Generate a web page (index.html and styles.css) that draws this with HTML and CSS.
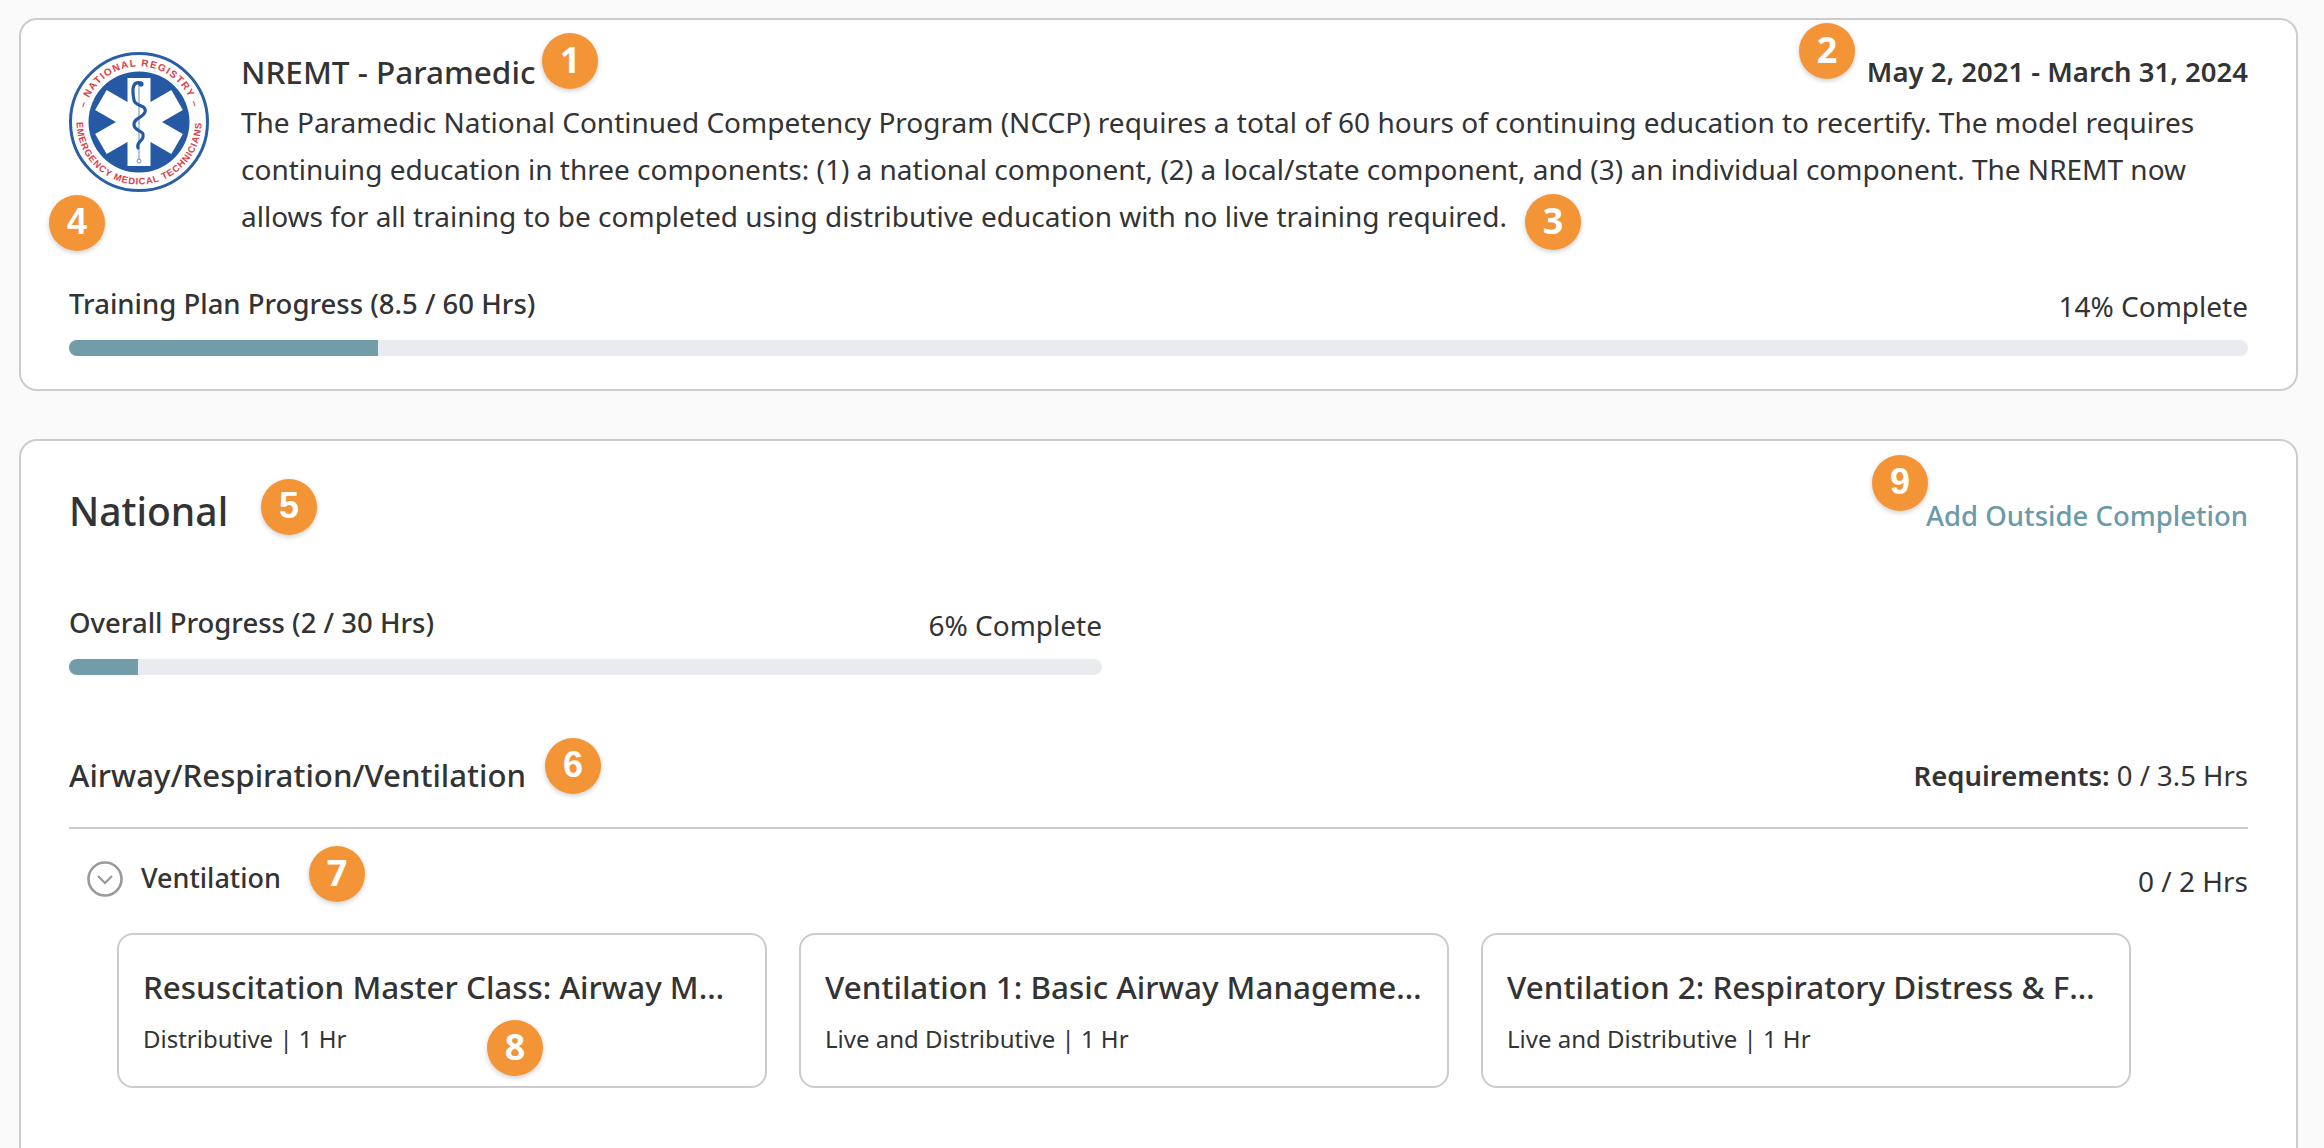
FILE: index.html
```html
<!DOCTYPE html>
<html lang="en">
<head>
  <meta charset="UTF-8">
  <title>NREMT - Paramedic Training Plan</title>
  <link rel="stylesheet" href="styles.css">
</head>
<body>
  <section class="card plan">
    <div class="plan-top">
      <svg class="logo" viewBox="0 0 140 140" role="img" aria-label="National Registry of Emergency Medical Technicians">
        <defs>
          <path id="arcTop" d="M 14.5 70 A 55.5 55.5 0 0 1 125.5 70"/>
          <path id="arcBottom" d="M 7.84 63.5 A 62.5 62.5 0 1 0 132.16 63.5"/>
        </defs>
        <circle cx="70" cy="70" r="68.5" fill="#fff" stroke="#2a5ea6" stroke-width="3"/>
        <circle cx="70" cy="70" r="50.5" fill="#2559a3"/>
        <g fill="#fff">
          <rect x="58.5" y="26" width="23" height="88"/>
          <rect x="58.5" y="26" width="23" height="88" transform="rotate(60 70 70)"/>
          <rect x="58.5" y="26" width="23" height="88" transform="rotate(120 70 70)"/>
        </g>
        <path d="M70 30V108" fill="none" stroke="#8fb0d6" stroke-width="1.4"/>
        <path d="M72 31C63 29 63 38 65 48C66 55 78 52 76 60C74 66 64 66 65 73C66 80 76 78 74 85C73 90 67 90 69 96" fill="none" stroke="#2559a3" stroke-width="3.2" stroke-linecap="round"/>
        <circle cx="72" cy="32" r="2.6" fill="#2559a3"/>
        <circle cx="70" cy="109" r="2" fill="none" stroke="#6d93c6" stroke-width="1"/>
        <text class="logo-text logo-top"><textPath href="#arcTop" startOffset="50%" text-anchor="middle">– NATIONAL REGISTRY –</textPath></text>
        <text class="logo-text"><textPath href="#arcBottom" startOffset="50%" text-anchor="middle">EMERGENCY MEDICAL TECHNICIANS</textPath></text>
      </svg>
      <div class="plan-info">
        <div class="plan-head">
          <h1 class="plan-title">NREMT - Paramedic</h1>
          <div class="plan-dates">May 2, 2021 - March 31, 2024</div>
        </div>
        <p class="plan-desc">The Paramedic National Continued Competency Program (NCCP) requires a total of 60 hours of continuing education to recertify. The model requires continuing education in three components: (1) a national component, (2) a local/state component, and (3) an individual component. The NREMT now allows for all training to be completed using distributive education with no live training required.</p>
      </div>
    </div>
    <div class="progress-row plan-progress">
      <span class="progress-label">Training Plan Progress (8.5 / 60 Hrs)</span>
      <span class="progress-pct">14% Complete</span>
    </div>
    <div class="bar"><div class="bar-fill" style="width: 14.17%"></div></div>
  </section>

  <section class="card national">
    <div class="national-head">
      <h2 class="national-title">National</h2>
      <a class="add-link" href="#">Add Outside Completion</a>
    </div>

    <div class="overall">
      <div class="progress-row">
        <span class="progress-label">Overall Progress (2 / 30 Hrs)</span>
        <span class="progress-pct">6% Complete</span>
      </div>
      <div class="bar"><div class="bar-fill" style="width: 6.67%"></div></div>
    </div>

    <div class="topic-head">
      <h3 class="topic-title">Airway/Respiration/Ventilation</h3>
      <div class="topic-req"><b>Requirements:</b> 0 / 3.5 Hrs</div>
    </div>

    <div class="sub-head">
      <div class="sub-left">
        <svg class="chevron" viewBox="0 0 36 36">
          <circle cx="18" cy="18" r="16.5" fill="none" stroke="#999" stroke-width="2.6"/>
          <path d="M11 15L18 22L25 15" fill="none" stroke="#999" stroke-width="2.2"/>
        </svg>
        <span class="sub-title">Ventilation</span>
      </div>
      <span class="sub-hrs">0 / 2 Hrs</span>
    </div>

    <div class="courses">
      <div class="course">
        <div class="course-title">Resuscitation Master Class: Airway Management</div>
        <div class="course-meta">Distributive | 1 Hr</div>
      </div>
      <div class="course">
        <div class="course-title">Ventilation 1: Basic Airway Management and Oxygenation</div>
        <div class="course-meta">Live and Distributive | 1 Hr</div>
      </div>
      <div class="course">
        <div class="course-title">Ventilation 2: Respiratory Distress &amp; Failure</div>
        <div class="course-meta">Live and Distributive | 1 Hr</div>
      </div>
    </div>
  </section>

  <span class="badge alt b1">1</span>
  <span class="badge alt b2">2</span>
  <span class="badge alt b3">3</span>
  <span class="badge b4">4</span>
  <span class="badge b5">5</span>
  <span class="badge b6">6</span>
  <span class="badge alt b7">7</span>
  <span class="badge alt b8">8</span>
  <span class="badge b9">9</span>
</body>
</html>
```

FILE: styles.css
```css
html, body {
  height: 100%;
  overflow: hidden;
}
body {
  position: relative;
  margin: 0;
  padding: 18px 26px 0 19px;
  box-sizing: border-box;
  background: #fafafa;
  font-family: "Noto Sans", Arial, sans-serif;
  color: #333;
}
h1, h2, h3, p {
  margin: 0;
}
.card {
  background: #fff;
  border: 2px solid #ccc;
  border-radius: 18px;
  padding: 32px 48px;
}
.plan {
  height: 373px;
  box-sizing: border-box;
}
.plan-top {
  display: flex;
  gap: 32px;
}
.logo {
  width: 140px;
  height: 140px;
  flex: none;
}
.logo-text {
  font-family: "Liberation Sans", Arial, sans-serif;
  font-size: 9.4px;
  font-weight: 700;
  letter-spacing: 0.8px;
  fill: #d8414a;
}
.logo-top {
  font-size: 10px;
  letter-spacing: 1.2px;
}
.plan-info {
  flex: 1;
}
.plan-head {
  display: flex;
  justify-content: space-between;
  align-items: center;
  height: 38px;
}
.plan-title {
  font-size: 31.5px;
  font-weight: 500;
}
.plan-dates {
  font-size: 27.5px;
  font-weight: 600;
}
.plan-desc {
  margin-top: 9px;
  font-size: 28px;
  line-height: 47px;
}
.progress-row {
  display: flex;
  justify-content: space-between;
  align-items: center;
  height: 36px;
  margin-bottom: 19px;
}
.plan-progress {
  margin-top: 45px;
}
.progress-label {
  font-size: 27.5px;
  font-weight: 500;
}
.progress-pct {
  padding-top: 5px;
  font-size: 28px;
}
.bar {
  height: 16px;
  border-radius: 8px;
  background: #e9ebef;
  overflow: hidden;
}
.bar-fill {
  height: 100%;
  background: #719ca8;
}
.national {
  margin-top: 48px;
  height: 900px;
  box-sizing: border-box;
}
.national-head {
  display: flex;
  justify-content: space-between;
  align-items: center;
  height: 74px;
}
.national-title {
  font-size: 39px;
  font-weight: 500;
}
.add-link {
  padding-top: 10px;
  color: #6c9aa8;
  font-size: 27.5px;
  font-weight: 500;
  text-decoration: none;
}
.overall {
  width: 1033px;
  margin-top: 57px;
}
.topic-head {
  display: flex;
  justify-content: space-between;
  align-items: center;
  height: 58px;
  margin-top: 71px;
  padding-bottom: 23px;
  border-bottom: 2px solid #ccc;
}
.topic-title {
  font-size: 31.2px;
  font-weight: 500;
}
.topic-req {
  font-size: 27.5px;
}
.topic-req b {
  font-weight: 600;
}
.sub-head {
  display: flex;
  justify-content: space-between;
  align-items: center;
  height: 50px;
  margin-top: 23px;
}
.sub-left {
  display: flex;
  align-items: center;
  gap: 18px;
  padding-left: 18px;
}
.chevron {
  width: 36px;
  height: 36px;
  margin-top: 4px;
}
.sub-title {
  font-size: 27px;
  font-weight: 500;
}
.sub-hrs {
  padding-top: 8px;
  font-size: 28px;
}
.courses {
  display: flex;
  gap: 32px;
  margin-top: 31px;
  padding-left: 48px;
}
.course {
  width: 650px;
  height: 155px;
  box-sizing: border-box;
  border: 2px solid #ccc;
  border-radius: 16px;
  padding: 30px 24px 0;
}
.course-title {
  font-size: 31.4px;
  font-weight: 500;
  white-space: nowrap;
  overflow: hidden;
  text-overflow: ellipsis;
}
.course-meta {
  margin-top: 14px;
  font-size: 24px;
}
.badge {
  position: absolute;
  width: 56px;
  height: 56px;
  border-radius: 50%;
  background: #f39436;
  color: #fff;
  font-family: "Liberation Sans", Arial, sans-serif;
  font-size: 36px;
  font-weight: 700;
  line-height: 54px;
  text-align: center;
  box-shadow: 0 2px 5px rgba(0, 0, 0, 0.2);
}
.badge.alt {
  font-family: "Noto Sans", Arial, sans-serif;
}
.b1 { left: 542px; top: 33px; }
.b2 { left: 1799px; top: 23px; }
.b3 { left: 1525px; top: 194px; }
.b4 { left: 49px; top: 195px; }
.b5 { left: 261px; top: 479px; }
.b6 { left: 545px; top: 738px; }
.b7 { left: 309px; top: 846px; }
.b8 { left: 487px; top: 1020px; }
.b9 { left: 1872px; top: 455px; }
```
